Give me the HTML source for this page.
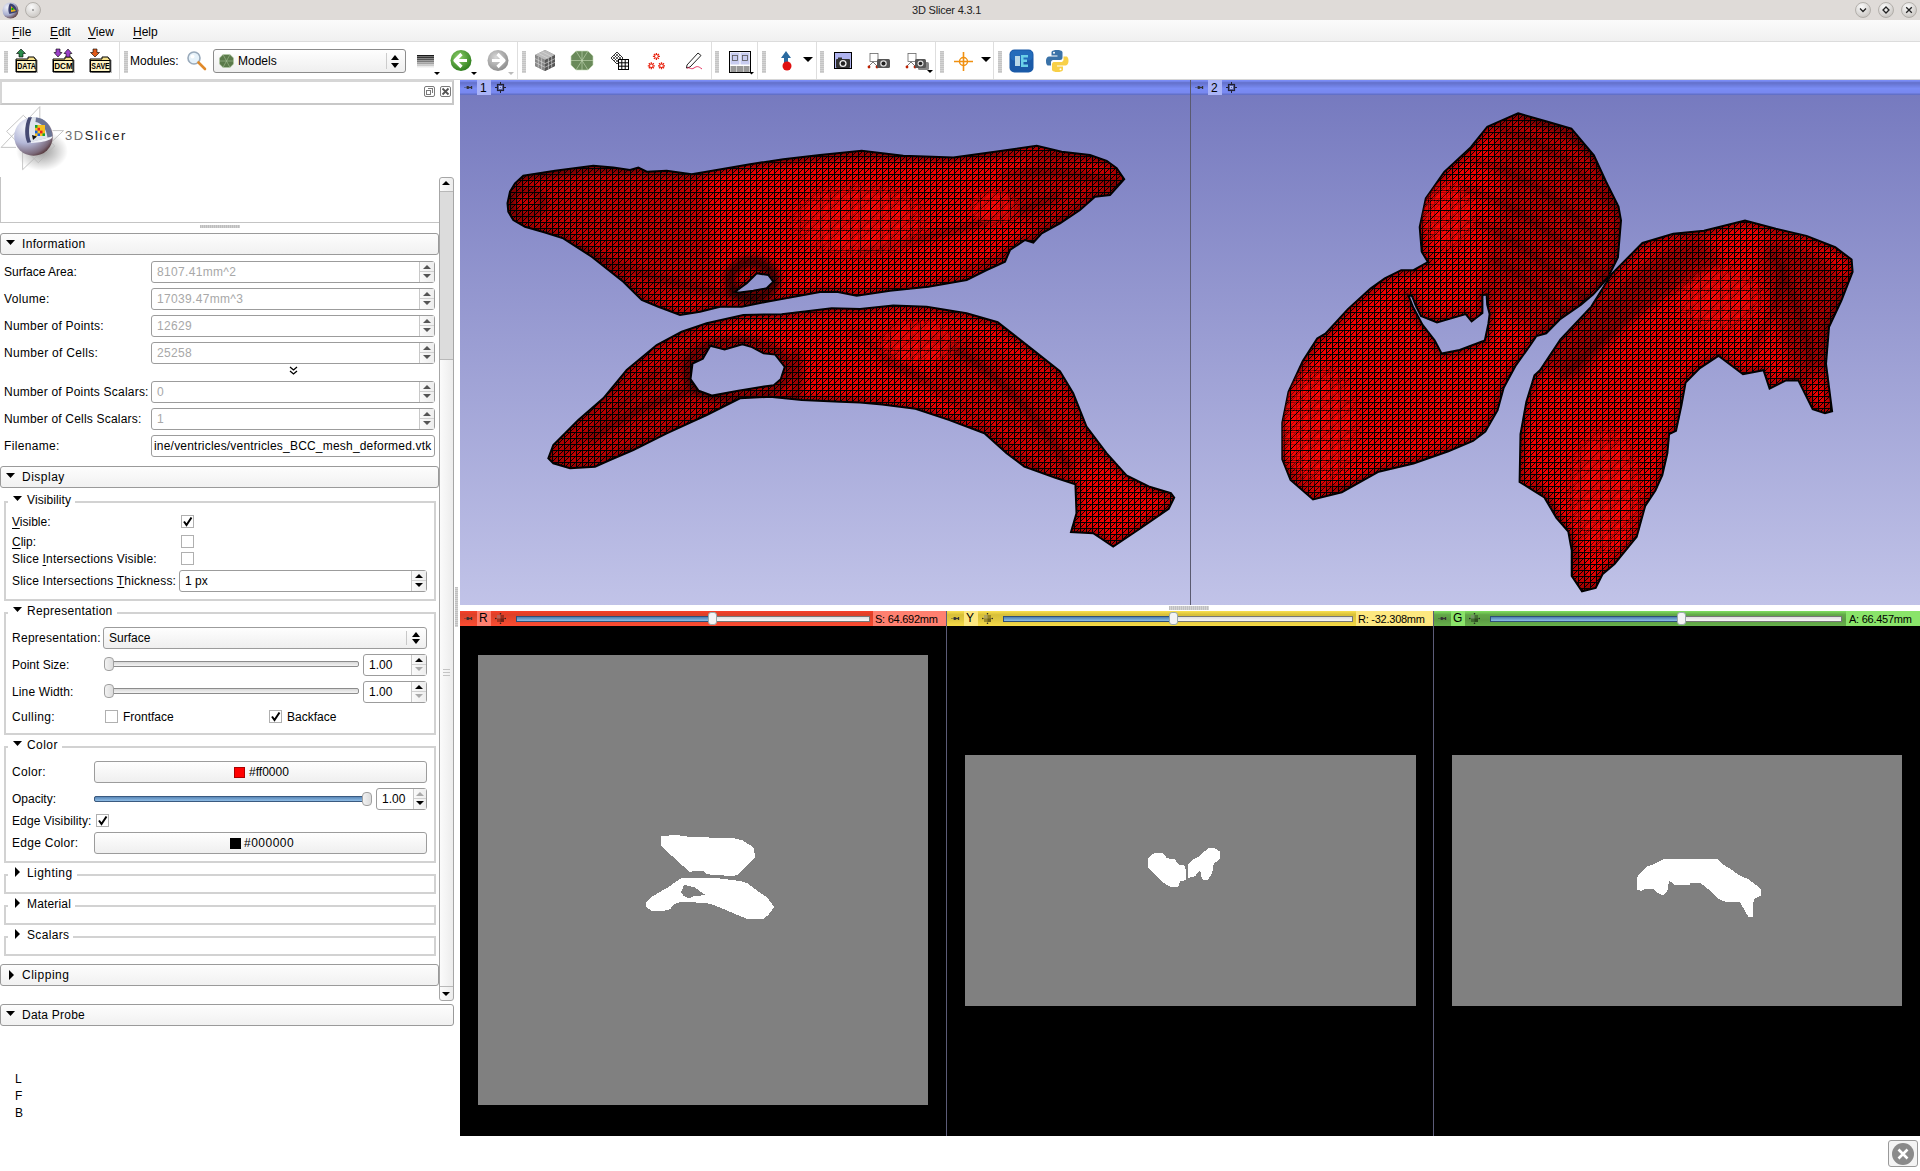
<!DOCTYPE html>
<html><head><meta charset="utf-8">
<style>
*{margin:0;padding:0;box-sizing:border-box}
html,body{width:1920px;height:1171px;overflow:hidden;background:#fff;font-family:"Liberation Sans",sans-serif;font-size:12px;color:#000}
.a{position:absolute}
.t{position:absolute;white-space:nowrap;line-height:14px}
u{text-decoration:underline;text-decoration-thickness:1px;text-underline-offset:2px}
#title{left:0;top:0;width:1920px;height:20px;background:#dfdbd8}
#menu{left:0;top:20px;width:1920px;height:22px;background:linear-gradient(#fbfbfb,#f0f0f0);border-bottom:1px solid #dcdcdc}
#tb{left:0;top:42px;width:1920px;height:38px;background:#fff;border-bottom:1px solid #d6d6d6}
.hdl{position:absolute;top:51px;width:4px;height:22px;background:repeating-linear-gradient(#c4c4c4 0 1px,#d4d4d4 1px 2px)}
.sep{position:absolute;top:42px;width:1px;height:37px;background:#dedede}
.hdr{position:absolute;left:0;height:22px;border:1px solid #9a9a9a;border-radius:3px;background:linear-gradient(#fdfdfd,#f1f1f1)}
.hdr .tri{position:absolute;left:5px;top:6px;width:9px;height:5px;background:#000;clip-path:polygon(0 0,100% 0,50% 100%)}
.hdr .lbl{position:absolute;left:22px;top:3px;font-size:12px;line-height:14px}
.spin{position:absolute;height:22px;border:1px solid #9c9c9c;border-radius:3px;background:#fff}
.spin .v{position:absolute;left:5px;top:3px;line-height:14px;color:#a8a8a8}
.spin .btn::after{content:"";position:absolute;left:0;right:0;top:9px;height:1px;background:#d0d0d0}
.spin .btn{position:absolute;right:0;top:0;width:15px;height:20px;border-left:1px solid #c8c8c8;background:linear-gradient(90deg,#fafafa,#eee)}
.up{position:absolute;left:3px;top:3px;width:0;height:0;border-left:4px solid transparent;border-right:4px solid transparent;border-bottom:4px solid #555}
.dn{position:absolute;left:3px;top:12px;width:0;height:0;border-left:4px solid transparent;border-right:4px solid transparent;border-top:4px solid #555}
.grp{position:absolute;left:5px;width:430px;border:2px solid #d0d0d0;border-top:none}
.gline{position:absolute;height:2px;background:#d0d0d0}
.gtri{position:absolute;width:0;height:0;border-left:5px solid transparent;border-right:5px solid transparent;border-top:5px solid #000}
.rtri{position:absolute;width:0;height:0;border-top:5px solid transparent;border-bottom:5px solid transparent;border-left:5px solid #000}
.cb{position:absolute;width:13px;height:13px;border:1px solid #b0b0b0;background:#fff}
.btnw{position:absolute;border:1px solid #9c9c9c;border-radius:3px;background:linear-gradient(#fefefe,#efefef)}
</style></head><body>

<!-- TITLE BAR -->
<div id="title" class="a"></div>
<div class="t" style="left:912px;top:3px;font-size:11px;color:#222;letter-spacing:-0.2px">3D Slicer 4.3.1</div>

<!-- MENU -->
<div id="menu" class="a"></div>
<div class="t" style="left:12px;top:25px;font-size:12px"><u>F</u>ile</div>
<div class="t" style="left:50px;top:25px;font-size:12px"><u>E</u>dit</div>
<div class="t" style="left:88px;top:25px;font-size:12px"><u>V</u>iew</div>
<div class="t" style="left:133px;top:25px;font-size:12px"><u>H</u>elp</div>

<!-- TOOLBAR -->
<div id="tb" class="a"></div>
<div class="hdl" style="left:4px"></div>
<div class="hdl" style="left:124px"></div>
<div class="hdl" style="left:522px"></div>
<div class="hdl" style="left:715px"></div>
<div class="hdl" style="left:762px"></div>
<div class="hdl" style="left:820px"></div>
<div class="hdl" style="left:940px"></div>
<div class="hdl" style="left:998px"></div>
<div class="sep" style="left:119px"></div>
<div class="sep" style="left:517px"></div>
<div class="sep" style="left:711px"></div>
<div class="sep" style="left:757px"></div>
<div class="sep" style="left:816px"></div>
<div class="sep" style="left:935px"></div>
<div class="sep" style="left:993px"></div>
<svg class="a" style="left:15px;top:48px" width="24" height="26" viewBox="0 0 24 26"><rect x="2" y="11" width="20" height="13" fill="#000" opacity="0.25" transform="translate(1,1)"/><path d="M13 9h6l1 2h1v13H1V11h12z" fill="#f5e08a" stroke="#000" stroke-width="1"/><rect x="1.5" y="12.5" width="19.5" height="11" fill="#fdf4c4" stroke="#000" stroke-width="1"/><text x="11.5" y="21.2" font-family="Liberation Sans" font-size="9.6" font-weight="bold" text-anchor="middle" textLength="18.5" lengthAdjust="spacingAndGlyphs">DATA</text><path d="M6 1L10.5 5.5H8V9H4V5.5H1.5Z" fill="#2a8a4a" stroke="#000" stroke-width="0.6"/></svg>
<svg class="a" style="left:52px;top:48px" width="24" height="26" viewBox="0 0 24 26"><rect x="2" y="11" width="20" height="13" fill="#000" opacity="0.25" transform="translate(1,1)"/><path d="M13 9h6l1 2h1v13H1V11h12z" fill="#f5e08a" stroke="#000" stroke-width="1"/><rect x="1.5" y="12.5" width="19.5" height="11" fill="#fdf4c4" stroke="#000" stroke-width="1"/><text x="11.5" y="21.2" font-family="Liberation Sans" font-size="9.6" font-weight="bold" text-anchor="middle" textLength="18.5" lengthAdjust="spacingAndGlyphs">DCM</text><path d="M6 9L10 4.5H8V1H4V4.5H2Z" fill="#9a40c8" stroke="#000" stroke-width="0.6"/><path d="M16 1L20 5.5H18V9H14V5.5H12Z" fill="#9a40c8" stroke="#000" stroke-width="0.6"/></svg>
<svg class="a" style="left:89px;top:48px" width="24" height="26" viewBox="0 0 24 26"><rect x="2" y="11" width="20" height="13" fill="#000" opacity="0.25" transform="translate(1,1)"/><path d="M13 9h6l1 2h1v13H1V11h12z" fill="#f5e08a" stroke="#000" stroke-width="1"/><rect x="1.5" y="12.5" width="19.5" height="11" fill="#fdf4c4" stroke="#000" stroke-width="1"/><text x="11.5" y="21.2" font-family="Liberation Sans" font-size="9.6" font-weight="bold" text-anchor="middle" textLength="18.5" lengthAdjust="spacingAndGlyphs">SAVE</text><path d="M6 9L10.5 4.5H8V1H4V4.5H1.5Z" fill="#e05a1a" stroke="#000" stroke-width="0.6"/></svg>
<div class="t" style="left:130px;top:54px">Modules:</div>
<svg class="a" style="left:186px;top:50px" width="22" height="22"><circle cx="8" cy="8" r="6" fill="#e6f2fa" stroke="#9ab" stroke-width="1.6"/><circle cx="6.5" cy="6.5" r="2" fill="#fff"/><path d="M12.5 12.5L19 19" stroke="#e08a2a" stroke-width="2.6" stroke-linecap="round"/></svg>
<div class="btnw" style="left:213px;top:49px;width:193px;height:24px;border-color:#8c8c8c"><svg class="a" style="left:5px;top:4px" width="15" height="14"><path d="M4 0.5H11L14.5 4V10L11 13.5H4L0.5 10V4Z" fill="#5a7a4a"/><path d="M4 0.5H11L14.5 4V10L11 13.5H4L0.5 10V4Z M4 0.5L11 13.5M11 0.5L4 13.5M0.5 7H14.5" fill="none" stroke="#b8d0a8" stroke-width="0.6" opacity="0.8"/></svg><div class="t" style="left:24px;top:4px;font-size:12px">Models</div><div class="a" style="left:172px;top:3px;width:1px;height:16px;background:#ccc"></div><div class="a" style="left:177px;top:5px;width:0;height:0;border-left:4px solid transparent;border-right:4px solid transparent;border-bottom:5px solid #000"></div><div class="a" style="left:177px;top:13px;width:0;height:0;border-left:4px solid transparent;border-right:4px solid transparent;border-top:5px solid #000"></div></div>
<div class="a" style="left:417px;top:55px;width:17px;height:13px;background:repeating-linear-gradient(transparent 0 1px,rgba(255,255,255,0.35) 1px 2px),linear-gradient(#111,#555 35%,#bbb 75%,#fff)"></div>
<div class="a" style="left:434px;top:72px;width:0;height:0;border-left:3px solid transparent;border-right:3px solid transparent;border-top:3px solid #000"></div>
<div class="a" style="left:471px;top:72px;width:0;height:0;border-left:3px solid transparent;border-right:3px solid transparent;border-top:3px solid #000"></div>
<div class="a" style="left:508px;top:72px;width:0;height:0;border-left:3px solid transparent;border-right:3px solid transparent;border-top:3px solid #bbb"></div>
<svg class="a" style="left:450px;top:49px" width="22" height="23"><defs><radialGradient id="gb" cx="0.4" cy="0.35" r="0.7"><stop offset="0" stop-color="#8ed06a"/><stop offset="1" stop-color="#2a7a1a"/></radialGradient></defs><circle cx="11" cy="11.5" r="10.5" fill="url(#gb)"/><path d="M11.5 5L5 11.5L11.5 18M5.5 11.5H17" stroke="#fff" stroke-width="3.2" fill="none" stroke-linejoin="round"/></svg>
<svg class="a" style="left:487px;top:49px" width="22" height="23"><defs><radialGradient id="gg" cx="0.4" cy="0.35" r="0.7"><stop offset="0" stop-color="#d8d8d8"/><stop offset="1" stop-color="#8a8a8a"/></radialGradient></defs><circle cx="11" cy="11.5" r="10.5" fill="url(#gg)"/><path d="M10.5 5L17 11.5L10.5 18M16.5 11.5H5" stroke="#fff" stroke-width="3.2" fill="none" stroke-linejoin="round"/></svg>
<svg class="a" style="left:534px;top:49px" width="22" height="23"><path d="M11 1L21 6V17L11 22L1 17V6Z" fill="#777"/><path d="M11 1L21 6L11 11L1 6Z" fill="#bbb"/><path d="M1 6L11 11V22L1 17Z" fill="#888"/><path d="M21 6L11 11V22L21 17Z" fill="#555"/><path d="M4.3 4.3L14.3 9.3M7.6 2.6L17.6 7.6M4.3 7.6V18.6M7.6 9.3V20.3M17.7 7.6V18.6M14.4 9.3V20.3M1 9.6L11 14.6L21 9.6M1 13.3L11 18.3L21 13.3" stroke="#ddd" stroke-width="0.6" fill="none"/></svg>
<svg class="a" style="left:570px;top:50px" width="24" height="21"><path d="M6 1H18L23 6V15L18 20H6L1 15V6Z" fill="#6a8a5a"/><path d="M6 1H18L23 6V15L18 20H6L1 15V6Z M6 1L18 20M18 1L6 20M1 10.5H23M12 1V20" stroke="#c8dcb8" stroke-width="0.6" fill="none"/></svg>
<svg class="a" style="left:610px;top:51px" width="20" height="20"><path d="M1 7L7 1L13 7L7 13Z" fill="#fff" stroke="#000" stroke-width="0.8"/><path d="M2.5 5.5L8.5 11.5M4 4L10 10M5.5 2.5L11.5 8.5M2.5 8.5L8.5 2.5M4 10L10 4M5.5 11.5L11.5 5.5" stroke="#000" stroke-width="0.6"/><rect x="8.5" y="8.5" width="10" height="10" fill="#fff" stroke="#000" stroke-width="1"/><path d="M11.8 8.5V18.5M15.2 8.5V18.5M8.5 11.8H18.5M8.5 15.2H18.5" stroke="#000" stroke-width="1"/></svg>
<svg class="a" style="left:646px;top:52px" width="21" height="18"><path d="M6.90 4.40L13.90 4.40M7.93 1.93L12.87 6.87M10.40 0.90L10.40 7.90M12.87 1.93L7.93 6.87M1.80 13.80L8.80 13.80M2.83 11.33L7.77 16.27M5.30 10.30L5.30 17.30M7.77 11.33L2.83 16.27M12.00 13.80L19.00 13.80M13.03 11.33L17.97 16.27M15.50 10.30L15.50 17.30M17.97 11.33L13.03 16.27" stroke="#e8200c" stroke-width="1.3" fill="none"/><circle cx="10.4" cy="4.4" r="1.3" fill="#fff"/><circle cx="5.3" cy="13.8" r="1.3" fill="#fff"/><circle cx="15.5" cy="13.8" r="1.3" fill="#fff"/></svg>
<svg class="a" style="left:685px;top:51px" width="19" height="20"><path d="M2 14L13 2L16 4.5L5 16L1.5 17Z" fill="#fff" stroke="#222" stroke-width="1"/><path d="M2 17C5 16 6 19 9 17S13 15 17 18" stroke="#e02050" stroke-width="0.9" fill="none"/></svg>
<svg class="a" style="left:729px;top:51px" width="25" height="24"><rect x="0.5" y="0.5" width="21" height="21" fill="#fff" stroke="#000"/><rect x="1.5" y="1.5" width="9" height="12" fill="#c8ccf0"/><rect x="11.5" y="1.5" width="9" height="12" fill="#c8ccf0"/><rect x="3.5" y="4.5" width="5" height="5" fill="none" stroke="#555" stroke-width="0.8"/><rect x="13.5" y="4.5" width="5" height="5" fill="none" stroke="#555" stroke-width="0.8"/><rect x="1.5" y="15" width="6" height="6" fill="#999"/><rect x="8" y="15" width="6" height="6" fill="#999"/><rect x="14.5" y="15" width="6" height="6" fill="#999"/><path d="M20 21H25L22.5 23.5Z" fill="#000"/></svg>
<svg class="a" style="left:780px;top:50px" width="14" height="22"><path d="M6 1L11 8H8V14H4V8H1Z" fill="#2a6aa0"/><circle cx="7" cy="16" r="4.5" fill="#e01010"/></svg>
<div class="a" style="left:803px;top:57px;width:0;height:0;border-left:5px solid transparent;border-right:5px solid transparent;border-top:5px solid #000"></div>
<svg class="a" style="left:834px;top:52px" width="19" height="18"><rect x="0.5" y="0.5" width="17" height="16" fill="#b0b4f0" stroke="#000"/><rect x="2" y="7" width="14" height="9" rx="1" fill="#333"/><circle cx="9" cy="11.5" r="3.6" fill="#eee"/><circle cx="9" cy="11.5" r="2.2" fill="#222"/><rect x="4" y="5.5" width="4" height="2" fill="#333"/></svg>
<svg class="a" style="left:867px;top:53px" width="24" height="17"><rect x="3" y="0.5" width="8" height="8" fill="#fff" stroke="#666" stroke-width="0.8"/><path d="M3 12L6 9L9 12M1 14L3 12M11 14L9 12" stroke="#555" stroke-width="0.8" fill="none"/><circle cx="2" cy="14" r="1.4" fill="#c02000"/><circle cx="10" cy="14" r="1.4" fill="#c02000"/><rect x="10" y="6" width="13" height="9" rx="1.5" fill="#555"/><circle cx="16.5" cy="10.5" r="3.3" fill="#ddd"/><circle cx="16.5" cy="10.5" r="2" fill="#222"/></svg>
<svg class="a" style="left:905px;top:53px" width="28" height="20"><rect x="3" y="0.5" width="8" height="8" fill="#fff" stroke="#666" stroke-width="0.8"/><path d="M3 12L6 9L9 12M1 14L3 12M11 14L9 12" stroke="#555" stroke-width="0.8" fill="none"/><circle cx="2" cy="14" r="1.4" fill="#c02000"/><circle cx="10" cy="14" r="1.4" fill="#c02000"/><rect x="13" y="9" width="11" height="8" rx="1.5" fill="#888"/><rect x="10" y="6" width="11" height="9" rx="1.5" fill="#555"/><circle cx="15.5" cy="10.5" r="3" fill="#ddd"/><circle cx="15.5" cy="10.5" r="1.8" fill="#222"/><path d="M22 17H28L25 20Z" fill="#000"/></svg>
<svg class="a" style="left:953px;top:51px" width="21" height="21"><path d="M10.5 1V20M1 10.5H20" stroke="#f09010" stroke-width="1.6"/><circle cx="10.5" cy="10.5" r="4" fill="none" stroke="#f09010" stroke-width="1.4"/></svg>
<div class="a" style="left:981px;top:57px;width:0;height:0;border-left:5px solid transparent;border-right:5px solid transparent;border-top:5px solid #000"></div>
<svg class="a" style="left:1009px;top:49px" width="25" height="24"><rect x="0.5" y="0.5" width="24" height="23" rx="5" fill="#1a5aa8"/><rect x="1.5" y="1.5" width="22" height="10" rx="4" fill="#2a78c8" opacity="0.6"/><path d="M6 7H11V17H6Z" fill="#b8d8e8"/><path d="M12 6H19V8.5H14.5V10.5H18V13H14.5V15.5H19V18H12Z" fill="#6ad0e8"/></svg>
<svg class="a" style="left:1045px;top:49px" width="25" height="24"><path d="M12 1C6 1 6.5 3.5 6.5 3.5V6.5H12.5V7.5H4C1 7.5 1 12 1 12C1 17 3.5 16.5 3.5 16.5H6V13.5C6 13.5 6 11 8.5 11H15C15 11 17.5 11 17.5 8.5V3.5C17.5 3.5 18 1 12 1Z" fill="#3a72a8"/><path d="M12.5 23C18.5 23 18 20.5 18 20.5V17.5H12V16.5H20.5C23.5 16.5 23.5 12 23.5 12C23.5 7 21 7.5 21 7.5H18.5V10.5C18.5 10.5 18.5 13 16 13H9.5C9.5 13 7 13 7 15.5V20.5C7 20.5 6.5 23 12.5 23Z" fill="#f8d048"/><circle cx="9" cy="3.8" r="1" fill="#fff"/><circle cx="15.5" cy="20.2" r="1" fill="#fff"/></svg>
<svg class="a" style="left:1px;top:1px" width="19" height="19"><defs><radialGradient id="ts" cx="0.3" cy="0.3" r="0.8"><stop offset="0" stop-color="#eef0f8"/><stop offset="0.6" stop-color="#a8aed0"/><stop offset="1" stop-color="#5a3838"/></radialGradient></defs><circle cx="9.5" cy="9.5" r="8" fill="url(#ts)"/><path d="M9 2.5C7 5 7 11 8.5 13C11 12 14 12 16 11C16 6 13 3 9 2.5Z" fill="#3a4070"/><path d="M10 5L10 11L15 10Z" fill="#e8b020"/><rect x="10.5" y="7" width="2" height="2" fill="#0a0"/></svg>
<svg class="a" style="left:24px;top:1px" width="18" height="18"><defs><radialGradient id="wb" cx="0.4" cy="0.3" r="0.8"><stop offset="0" stop-color="#fafafa"/><stop offset="1" stop-color="#c4c0bc"/></radialGradient></defs><circle cx="9" cy="9" r="7.5" fill="url(#wb)" stroke="#a8a4a0" stroke-width="0.8"/><circle cx="9" cy="9" r="0.8" fill="#555"/></svg>
<svg class="a" style="left:1854px;top:1px" width="18" height="18"><defs><radialGradient id="wbv" cx="0.4" cy="0.3" r="0.8"><stop offset="0" stop-color="#fafafa"/><stop offset="1" stop-color="#c4c0bc"/></radialGradient></defs><circle cx="9" cy="9" r="7.5" fill="url(#wbv)" stroke="#a8a4a0" stroke-width="0.8"/><path d="M6 7.5L9 10.5L12 7.5" stroke="#222" stroke-width="1.3" fill="none"/></svg>
<svg class="a" style="left:1877px;top:1px" width="18" height="18"><defs><radialGradient id="wbo" cx="0.4" cy="0.3" r="0.8"><stop offset="0" stop-color="#fafafa"/><stop offset="1" stop-color="#c4c0bc"/></radialGradient></defs><circle cx="9" cy="9" r="7.5" fill="url(#wbo)" stroke="#a8a4a0" stroke-width="0.8"/><path d="M9 6L12 9L9 12L6 9Z" stroke="#222" stroke-width="1.3" fill="none"/></svg>
<svg class="a" style="left:1900px;top:1px" width="18" height="18"><defs><radialGradient id="wbx" cx="0.4" cy="0.3" r="0.8"><stop offset="0" stop-color="#fafafa"/><stop offset="1" stop-color="#c4c0bc"/></radialGradient></defs><circle cx="9" cy="9" r="7.5" fill="url(#wbx)" stroke="#a8a4a0" stroke-width="0.8"/><path d="M6.2 6.2L11.8 11.8M11.8 6.2L6.2 11.8" stroke="#222" stroke-width="1.3"/></svg>

<!-- LEFT PANEL -->
<div class="a" style="left:0;top:80px;width:454px;height:25px;border:2px solid #d6d6d6;border-bottom-color:#c8c8c8;border-right-color:#c8c8c8;background:#fff"></div>
<div class="a" style="left:424px;top:86px;width:11px;height:11px;border:1px solid #7a7a7a;border-radius:2px"></div>
<div class="a" style="left:426px;top:90px;width:5px;height:5px;border:1px solid #7a7a7a;background:#fff"></div>
<div class="a" style="left:428px;top:88px;width:5px;height:5px;border:1px solid #7a7a7a;border-left:none;border-bottom:none"></div>
<div class="a" style="left:440px;top:86px;width:11px;height:11px;border:1px solid #7a7a7a;border-radius:2px"></div>
<svg class="a" style="left:440px;top:86px" width="11" height="11"><path d="M2.5 2.5L8.5 8.5M8.5 2.5L2.5 8.5" stroke="#555" stroke-width="1.8"/></svg>
<svg class="a" style="left:0;top:104px" width="70" height="72">
<defs><radialGradient id="sph" cx="0.3" cy="0.25" r="0.85"><stop offset="0" stop-color="#f6f8fc"/><stop offset="0.5" stop-color="#b4b8d8"/><stop offset="0.85" stop-color="#7a6878"/><stop offset="1" stop-color="#4a2828"/></radialGradient>
<radialGradient id="shd" cx="0.5" cy="0.5" r="0.5"><stop offset="0" stop-color="#000" stop-opacity="0.4"/><stop offset="1" stop-color="#000" stop-opacity="0"/></radialGradient></defs>
<ellipse cx="42" cy="47" rx="26" ry="20" fill="url(#shd)"/>
<path d="M1.1 43.4L39.8 2.6V26.599999999999994 M1.1 43.4H16 M22.6 39.8V65.69999999999999L63.5 26.6H52.5 M6.6 27.4L23.3 11.3L54.7 41.9L38.3 58.7Z" fill="none" stroke="#b8b8b8" stroke-width="0.8"/>
<circle cx="33.5" cy="32.5" r="19.3" fill="url(#sph)"/>
<path d="M28.4 13.3C32.0 12.5 45.0 12.0 52.5 32.5L31.0 38.0C27.0 31.0 27.0 20.0 28.4 13.3Z" fill="#dfe4ec"/>
<path d="M28.4 13.3C24.0 22.0 24.5 33.0 27.5 39.0L31.0 38.0C28.0 31.0 28.5 20.0 32.0 13.2Z" fill="#454a72"/>
<path d="M36.0 13.5C45.0 14.0 51.0 21.0 52.5 32.5L47.5 33.5C46.5 25.0 42.0 19.0 35.5 18.0Z" fill="#6a7494"/>
<path d="M31.0 38.0L52.5 32.5C52.0 35.0 48.0 38.0 31.0 39.0Z" fill="#f0f2f8"/>
<rect x="35" y="21" width="10" height="11" fill="#f5c020"/>
<rect x="35" y="21" width="2.5" height="2.8" fill="#14a030"/><rect x="37.5" y="23.799999999999997" width="2.5" height="2.8" fill="#e82020"/><rect x="35" y="26.599999999999994" width="2.5" height="2.8" fill="#1860e0"/><rect x="40" y="26.599999999999994" width="2.5" height="2.8" fill="#e82020"/><rect x="37.5" y="29.400000000000006" width="2.5" height="2.6" fill="#1860e0"/><rect x="42.5" y="29.400000000000006" width="2.5" height="2.6" fill="#14a030"/>
<path d="M32.0 31.0L37.0 32.5L33.0 36.0Z" fill="#111"/>
</svg>
<div class="t" style="left:65px;top:129px;font-size:13px;letter-spacing:1.6px;color:#1a1a1a"><span style="color:#707070">3D</span>Slicer</div>
<div class="a" style="left:0;top:177px;width:439px;height:46px;border-left:1px solid #c4c4c4;border-bottom:1px solid #c4c4c4"></div>
<div class="a" style="left:200px;top:225px;width:40px;height:3px;background:repeating-linear-gradient(90deg,#bdbdbd 0 1px,#d0d0d0 1px 2px)"></div>
<div class="a" style="left:439px;top:177px;width:15px;height:824px;border:1px solid #a6a6a6;border-radius:3px;background:linear-gradient(90deg,#fbfbfb,#ececec)"></div>
<div class="a" style="left:440px;top:191px;width:13px;height:169px;background:#dcdcdc;border-top:1px solid #b8b8b8;border-bottom:1px solid #b8b8b8"></div>
<div class="a" style="left:442px;top:181px;width:0;height:0;border-left:4px solid transparent;border-right:4px solid transparent;border-bottom:4px solid #000"></div>
<div class="a" style="left:440px;top:986px;width:13px;height:1px;background:#b8b8b8"></div>
<div class="a" style="left:442px;top:992px;width:0;height:0;border-left:4px solid transparent;border-right:4px solid transparent;border-top:4px solid #000"></div>
<div class="a" style="left:443px;top:669px;width:7px;height:8px;background:repeating-linear-gradient(#c4c4c4 0 1px,transparent 1px 3px)"></div>
<div class="hdr" style="top:233px;width:439px;height:22px"><div class="tri"></div><div class="lbl" style="left:21px;letter-spacing:0.31px">Information</div></div>
<div class="t" style="left:4px;top:265px">Surface Area:</div>
<div class="spin" style="left:151px;top:261px;width:284px"><div class="v" style="letter-spacing:0.33px">8107.41mm^2</div><div class="btn"><div class="up"></div><div class="dn"></div></div></div>
<div class="t" style="left:4px;top:292px;letter-spacing:0.32px">Volume:</div>
<div class="spin" style="left:151px;top:288px;width:284px"><div class="v" style="letter-spacing:0.33px">17039.47mm^3</div><div class="btn"><div class="up"></div><div class="dn"></div></div></div>
<div class="t" style="left:4px;top:319px;letter-spacing:0.22px">Number of Points:</div>
<div class="spin" style="left:151px;top:315px;width:284px"><div class="v" style="letter-spacing:0.33px">12629</div><div class="btn"><div class="up"></div><div class="dn"></div></div></div>
<div class="t" style="left:4px;top:346px;letter-spacing:0.30px">Number of Cells:</div>
<div class="spin" style="left:151px;top:342px;width:284px"><div class="v" style="letter-spacing:0.33px">25258</div><div class="btn"><div class="up"></div><div class="dn"></div></div></div>
<div class="t" style="left:4px;top:385px;letter-spacing:0.21px">Number of Points Scalars:</div>
<div class="spin" style="left:151px;top:381px;width:284px"><div class="v">0</div><div class="btn"><div class="up"></div><div class="dn"></div></div></div>
<div class="t" style="left:4px;top:412px;letter-spacing:0.20px">Number of Cells Scalars:</div>
<div class="spin" style="left:151px;top:408px;width:284px"><div class="v">1</div><div class="btn"><div class="up"></div><div class="dn"></div></div></div>
<div class="t" style="left:4px;top:439px;letter-spacing:0.34px">Filename:</div>
<div class="spin" style="left:151px;top:435px;width:284px"><div class="v" style="color:#000;left:2px;letter-spacing:0.2px">ine/ventricles/ventricles_BCC_mesh_deformed.vtk</div></div>
<svg class="a" style="left:289px;top:366px" width="9" height="10"><path d="M1 1L4.5 4L8 1M1 5L4.5 8L8 5" fill="none" stroke="#000" stroke-width="1.3"/></svg>
<div class="hdr" style="top:466px;width:439px;height:22px"><div class="tri"></div><div class="lbl" style="left:21px;letter-spacing:0.50px">Display</div></div>
<div class="a" style="left:4px;top:501px;width:432px;height:100px;border:2px solid #d2d2d2"></div><div class="a" style="left:8px;top:493px;width:20px;height:14px;background:#fff"></div><div class="a" style="left:13px;top:496px;width:9px;height:5px;background:#000;clip-path:polygon(0 0,100% 0,50% 100%)"></div><div class="t" style="left:27px;top:493px;background:#fff;padding-right:4px;letter-spacing:0.09px">Visibility</div>
<div class="t" style="left:12px;top:515px"><u>V</u>isible:</div>
<div class="t" style="left:12px;top:535px"><u>C</u>lip:</div>
<div class="t" style="left:12px;top:552px;letter-spacing:0.20px">Slice <u>I</u>ntersections Visible:</div>
<div class="t" style="left:12px;top:574px;letter-spacing:0.21px">Slice Intersections <u>T</u>hickness:</div>
<div class="cb" style="left:181px;top:515px"></div><svg class="a" style="left:181px;top:515px" width="13" height="13"><path d="M3 6.5L5.5 10L10.5 2.5" fill="none" stroke="#000" stroke-width="2"/></svg>
<div class="cb" style="left:181px;top:535px"></div>
<div class="cb" style="left:181px;top:552px"></div>
<div class="spin" style="left:179px;top:570px;width:248px"><div class="v" style="color:#000">1 px</div><div class="btn"><div class="up" style="border-bottom-color:#000"></div><div class="dn" style="border-top-color:#000"></div></div></div>
<div class="a" style="left:4px;top:612px;width:432px;height:123px;border:2px solid #d2d2d2"></div><div class="a" style="left:8px;top:604px;width:20px;height:14px;background:#fff"></div><div class="a" style="left:13px;top:607px;width:9px;height:5px;background:#000;clip-path:polygon(0 0,100% 0,50% 100%)"></div><div class="t" style="left:27px;top:604px;background:#fff;padding-right:4px;letter-spacing:0.30px">Representation</div>
<div class="t" style="left:12px;top:631px;letter-spacing:0.27px">Representation:</div>
<div class="btnw" style="left:103px;top:627px;width:324px;height:22px"><div class="t" style="left:5px;top:3px">Surface</div><div class="a" style="left:302px;top:3px;width:1px;height:14px;background:#c8c8c8"></div><div class="a" style="left:308px;top:4px;width:0;height:0;border-left:4px solid transparent;border-right:4px solid transparent;border-bottom:5px solid #000"></div><div class="a" style="left:308px;top:11px;width:0;height:0;border-left:4px solid transparent;border-right:4px solid transparent;border-top:5px solid #000"></div></div>
<div class="t" style="left:12px;top:658px">Point Size:</div>
<div class="a" style="left:104px;top:661px;width:255px;height:6px;border:1px solid #8c8c8c;border-radius:2px;background:linear-gradient(#d8d8d8,#f4f4f4)"></div><div class="a" style="left:104px;top:657px;width:10px;height:14px;border:1px solid #a0a0a0;border-radius:4px;background:linear-gradient(90deg,#f2f2f2,#dcdcdc)"></div>
<div class="spin" style="left:363px;top:654px;width:64px;height:22px"><div class="v" style="color:#000">1.00</div><div class="btn"><div class="up" style="border-bottom-color:#000"></div><div class="dn" style="border-top-color:#aaa"></div></div></div>
<div class="t" style="left:12px;top:685px;letter-spacing:0.14px">Line Width:</div>
<div class="a" style="left:104px;top:688px;width:255px;height:6px;border:1px solid #8c8c8c;border-radius:2px;background:linear-gradient(#d8d8d8,#f4f4f4)"></div><div class="a" style="left:104px;top:684px;width:10px;height:14px;border:1px solid #a0a0a0;border-radius:4px;background:linear-gradient(90deg,#f2f2f2,#dcdcdc)"></div>
<div class="spin" style="left:363px;top:681px;width:64px;height:22px"><div class="v" style="color:#000">1.00</div><div class="btn"><div class="up" style="border-bottom-color:#000"></div><div class="dn" style="border-top-color:#aaa"></div></div></div>
<div class="t" style="left:12px;top:710px;letter-spacing:0.37px">Culling:</div>
<div class="cb" style="left:105px;top:710px"></div>
<div class="t" style="left:123px;top:710px">Frontface</div>
<div class="cb" style="left:269px;top:710px"></div><svg class="a" style="left:269px;top:710px" width="13" height="13"><path d="M3 6.5L5.5 10L10.5 2.5" fill="none" stroke="#000" stroke-width="2"/></svg>
<div class="t" style="left:287px;top:710px">Backface</div>
<div class="a" style="left:4px;top:746px;width:432px;height:117px;border:2px solid #d2d2d2"></div><div class="a" style="left:8px;top:738px;width:20px;height:14px;background:#fff"></div><div class="a" style="left:13px;top:741px;width:9px;height:5px;background:#000;clip-path:polygon(0 0,100% 0,50% 100%)"></div><div class="t" style="left:27px;top:738px;background:#fff;padding-right:4px;letter-spacing:0.43px">Color</div>
<div class="t" style="left:12px;top:765px;letter-spacing:0.30px">Color:</div>
<div class="btnw" style="left:94px;top:761px;width:333px;height:22px"><div class="a" style="left:139px;top:5px;width:11px;height:11px;background:#f00;border:1px solid #a00"></div><div class="t" style="left:154px;top:3px">#ff0000</div></div>
<div class="t" style="left:12px;top:792px">Opacity:</div>
<div class="a" style="left:94px;top:796px;width:272px;height:6px;border:1px solid #8c8c8c;border-radius:2px;background:linear-gradient(#d8d8d8,#f4f4f4)"></div><div class="a" style="left:94px;top:796px;width:271px;height:6px;border:1px solid #3a5a80;border-radius:2px;background:linear-gradient(#5a88b8,#8fbde6)"></div><div class="a" style="left:362px;top:792px;width:10px;height:14px;border:1px solid #a0a0a0;border-radius:4px;background:linear-gradient(90deg,#f2f2f2,#dcdcdc)"></div>
<div class="spin" style="left:376px;top:788px;width:51px;height:22px"><div class="v" style="color:#000">1.00</div><div class="btn" style="width:13px"><div class="up" style="left:2px;border-bottom-color:#aaa"></div><div class="dn" style="left:2px;border-top-color:#000"></div></div></div>
<div class="t" style="left:12px;top:814px;letter-spacing:0.10px">Edge Visibility:</div>
<div class="cb" style="left:96px;top:814px"></div><svg class="a" style="left:96px;top:814px" width="13" height="13"><path d="M3 6.5L5.5 10L10.5 2.5" fill="none" stroke="#000" stroke-width="2"/></svg>
<div class="t" style="left:12px;top:836px;letter-spacing:0.27px">Edge Color:</div>
<div class="btnw" style="left:94px;top:832px;width:333px;height:22px"><div class="a" style="left:135px;top:5px;width:11px;height:11px;background:#000"></div><div class="t" style="left:149px;top:3px;letter-spacing:0.5px">#000000</div></div>
<div class="a" style="left:4px;top:874px;width:432px;height:20px;border:2px solid #d2d2d2"></div><div class="a" style="left:8px;top:866px;width:20px;height:14px;background:#fff"></div><div class="a" style="left:15px;top:867px;width:0;height:0;border-top:5px solid transparent;border-bottom:5px solid transparent;border-left:5px solid #000"></div><div class="t" style="left:27px;top:866px;background:#fff;padding-right:4px;letter-spacing:0.44px">Lighting</div>
<div class="a" style="left:4px;top:905px;width:432px;height:20px;border:2px solid #d2d2d2"></div><div class="a" style="left:8px;top:897px;width:20px;height:14px;background:#fff"></div><div class="a" style="left:15px;top:898px;width:0;height:0;border-top:5px solid transparent;border-bottom:5px solid transparent;border-left:5px solid #000"></div><div class="t" style="left:27px;top:897px;background:#fff;padding-right:4px;letter-spacing:0.17px">Material</div>
<div class="a" style="left:4px;top:936px;width:432px;height:20px;border:2px solid #d2d2d2"></div><div class="a" style="left:8px;top:928px;width:20px;height:14px;background:#fff"></div><div class="a" style="left:15px;top:929px;width:0;height:0;border-top:5px solid transparent;border-bottom:5px solid transparent;border-left:5px solid #000"></div><div class="t" style="left:27px;top:928px;background:#fff;padding-right:4px;letter-spacing:0.35px">Scalars</div>
<div class="hdr" style="top:964px;width:439px;height:22px"><div class="a" style="left:8px;top:5px;width:0;height:0;border-top:5px solid transparent;border-bottom:5px solid transparent;border-left:5px solid #000"></div><div class="lbl" style="left:21px;letter-spacing:0.51px">Clipping</div></div>
<div class="hdr" style="top:1004px;width:454px;height:22px"><div class="tri"></div><div class="lbl" style="left:21px;letter-spacing:0.23px">Data Probe</div></div>
<div class="t" style="left:15px;top:1072px">L</div>
<div class="t" style="left:15px;top:1089px">F</div>
<div class="t" style="left:15px;top:1106px">B</div>

<!-- VIEWS -->
<div class="a" style="left:460px;top:80px;width:1460px;height:525px;background:linear-gradient(#7478be,#c1c3e8)"></div>
<div class="a" style="left:460px;top:80px;width:1460px;height:15px;background:linear-gradient(#7a8cf5 0px,#7a8cf5 1px,#6674d0 2.5px,#6674d0 3.5px,#7080e2 6px,#7a8cf4 8.5px,#7888f0 12.5px,#6270c8 14.5px,#6270c8 15px)"></div>
<div class="a" style="left:1190px;top:80px;width:1px;height:525px;background:#5a5a70"></div>
<svg class="a" style="left:464px;top:85px" width="9" height="5"><path d="M0 2.5H2.5" stroke="#333" stroke-width="0.6" opacity="0.7"/><rect x="2.5" y="1" width="2.5" height="3" rx="0.8" fill="#333"/><rect x="5" y="1.8" width="2" height="1.4" fill="#333"/><rect x="7" y="1" width="1.2" height="3" fill="#333"/></svg>
<div class="a" style="left:477px;top:80px;width:14px;height:15px;background:#aab4f8"></div>
<div class="t" style="left:480px;top:81px;font-size:12px;line-height:14px">1</div>
<svg class="a" style="left:495px;top:82px" width="11" height="11"><path d="M5.5 0V11M0 5.5H11" stroke="#223" stroke-width="1"/><rect x="2.5" y="2.5" width="6" height="6" fill="#5a66b0" stroke="#223" stroke-width="1.2"/><rect x="4.5" y="4.5" width="2" height="2" fill="none" stroke="#c8d0ff" stroke-width="0.8"/></svg>
<svg class="a" style="left:1195px;top:85px" width="9" height="5"><path d="M0 2.5H2.5" stroke="#333" stroke-width="0.6" opacity="0.7"/><rect x="2.5" y="1" width="2.5" height="3" rx="0.8" fill="#333"/><rect x="5" y="1.8" width="2" height="1.4" fill="#333"/><rect x="7" y="1" width="1.2" height="3" fill="#333"/></svg>
<div class="a" style="left:1208px;top:80px;width:14px;height:15px;background:#aab4f8"></div>
<div class="t" style="left:1211px;top:81px;font-size:12px;line-height:14px">2</div>
<svg class="a" style="left:1226px;top:82px" width="11" height="11"><path d="M5.5 0V11M0 5.5H11" stroke="#223" stroke-width="1"/><rect x="2.5" y="2.5" width="6" height="6" fill="#5a66b0" stroke="#223" stroke-width="1.2"/><rect x="4.5" y="4.5" width="2" height="2" fill="none" stroke="#c8d0ff" stroke-width="0.8"/></svg>
<svg class="a" style="left:0;top:0" width="0" height="0"><defs>
<pattern id="mesh" width="12" height="12" patternUnits="userSpaceOnUse">
<rect width="12" height="12" fill="#f00000"/>
<path d="M0 0.5H12M0 6.5H12M0.5 0V12M6.5 0V12M0 6L6 0M6 12L12 6M6 6L12 0M0 12L6 6" stroke="#000" stroke-width="1" fill="none" shape-rendering="crispEdges"/>
</pattern>
<pattern id="mesh2" width="12" height="12" patternUnits="userSpaceOnUse">
<rect width="12" height="12" fill="#f00000"/>
<path d="M0 0.5H12M0 6.5H12M0.5 0V12M6.5 0V12M0 6L6 0M6 12L12 6M6 6L12 0M0 12L6 6" stroke="#000" stroke-width="1" fill="none" shape-rendering="crispEdges"/>
</pattern>

<pattern id="meshBig" width="20" height="20" patternUnits="userSpaceOnUse">
<rect width="20" height="20" fill="#ff0a0a"/>
<path d="M0 0.5H20M0 10.5H20M0.5 0V20M10.5 0V20M0 10L10 0M10 20L20 10M10 10L20 0M0 20L10 10" stroke="#000" stroke-width="1" fill="none" shape-rendering="crispEdges"/>
</pattern>
<radialGradient id="soft"><stop offset="0" stop-color="#fff"/><stop offset="0.6" stop-color="#fff"/><stop offset="1" stop-color="#000"/></radialGradient>
</defs></svg>
<svg class="a" style="left:0;top:0" width="1920" height="605" viewBox="0 0 1920 605"><defs><filter id="bl3" filterUnits="userSpaceOnUse" x="400" y="80" width="1520" height="525"><feGaussianBlur stdDeviation="3"/></filter><filter id="bl6" filterUnits="userSpaceOnUse" x="400" y="80" width="1520" height="525"><feGaussianBlur stdDeviation="6"/></filter><clipPath id="ctop1"><path d="M507.5 203.3 L510.0 191.7 L515.0 183.3 L523.3 175.8 L555.0 170.8 L593.3 165.8 L613.3 167.5 L630.0 170.0 L638.3 167.5 L646.7 171.7 L666.7 170.8 L691.7 174.2 L716.7 170.0 L750.0 164.2 L783.3 159.2 L820.0 155.0 L861.7 150.8 L903.3 155.8 L953.3 157.5 L995.0 151.7 L1036.7 145.8 L1061.7 151.7 L1090.0 155.0 L1106.7 160.8 L1116.7 168.3 L1124.2 179.2 L1110.0 195.0 L1095.0 196.7 L1080.0 210.0 L1060.0 223.3 L1041.7 233.3 L1033.3 242.5 L1025.0 240.0 L1010.0 250.0 L1005.0 261.7 L986.7 270.0 L966.7 280.0 L928.3 286.7 L890.0 290.8 L856.7 295.8 L836.7 291.7 L820.0 292.0 L766.7 301.7 L741.7 306.7 L720.0 306.7 L700.0 311.7 L680.0 315.0 L658.3 306.7 L641.7 300.0 L623.3 281.7 L591.7 256.7 L563.3 238.3 L545.0 232.5 L525.0 226.7 L513.3 220.0 L508.3 211.7Z M735.0 291.7 L746.7 283.3 L756.7 273.3 L768.3 275.0 L773.3 281.7 L766.7 288.3 L753.3 290.8 L740.0 292.5Z" clip-rule="evenodd"/></clipPath><clipPath id="cbot1"><path d="M548.3 458.3 L553.3 445.0 L578.3 420.0 L603.3 398.3 L626.7 370.0 L656.7 345.0 L681.7 331.7 L706.7 323.3 L743.3 315.0 L781.7 314.2 L831.7 308.3 L860.0 309.0 L893.3 305.6 L926.6 306.7 L966.6 313.3 L997.7 322.2 L1028.8 346.6 L1059.9 371.1 L1073.2 393.3 L1086.5 426.6 L1106.5 453.2 L1126.5 475.4 L1148.7 486.5 L1170.9 493.2 L1174.2 497.6 L1168.7 508.7 L1139.8 528.7 L1113.2 546.5 L1093.2 533.2 L1071.0 532.1 L1076.5 513.2 L1075.4 484.3 L1055.4 477.7 L1024.3 466.6 L1006.6 453.2 L984.4 433.2 L948.8 419.9 L915.5 408.8 L882.2 404.4 L860.0 402.5 L840.0 401.7 L801.7 400.0 L770.0 396.7 L740.0 398.3 L706.7 415.0 L666.7 433.3 L633.3 450.0 L610.0 460.0 L595.0 466.7 L570.0 468.3 L553.3 463.3Z M710.3 345.7 L724.6 349.5 L742.4 344.3 L752.0 347.1 L763.6 353.2 L775.2 354.6 L784.8 366.9 L780.7 379.2 L773.8 385.3 L758.1 387.4 L738.3 390.8 L712.3 395.6 L698.7 390.8 L690.5 379.2 L692.5 363.5 L702.8 358.7Z" clip-rule="evenodd"/></clipPath><clipPath id="cleft2"><path d="M1518.0 113.3 L1546.8 121.5 L1571.4 128.7 L1593.9 155.4 L1606.2 182.0 L1618.5 206.6 L1621.0 220.5 L1617.9 257.4 L1607.7 277.9 L1593.3 294.3 L1581.0 304.6 L1560.5 318.9 L1546.2 333.3 L1536.5 336.0 L1530.4 345.0 L1516.0 365.1 L1503.7 387.7 L1497.6 410.2 L1485.3 431.7 L1473.0 441.0 L1448.4 451.2 L1413.5 463.5 L1378.7 471.7 L1341.8 492.2 L1313.0 499.4 L1290.5 479.9 L1282.3 459.4 L1282.3 422.5 L1288.5 391.8 L1302.8 361.0 L1317.2 338.5 L1325.4 333.7 L1347.9 309.1 L1370.5 288.6 L1384.8 278.4 L1401.2 270.2 L1413.5 270.2 L1427.9 262.0 L1421.7 251.7 L1419.7 227.1 L1425.8 198.4 L1444.3 171.8 L1470.9 147.2 L1487.3 126.7Z M1408.3 295.0 L1412.0 296.0 L1416.0 306.0 L1421.0 316.0 L1437.0 322.5 L1465.7 314.1 L1471.6 321.3 L1482.4 313.0 L1482.4 295.0 L1486.6 294.4 L1487.2 304.6 L1489.6 314.1 L1488.4 323.7 L1484.8 340.4 L1459.7 350.0 L1441.7 353.6 L1434.6 340.4 L1422.6 324.9 L1417.8 316.0 L1413.0 307.0Z" clip-rule="evenodd"/></clipPath><clipPath id="cright2"><path d="M1540.0 370.2 L1560.5 339.4 L1591.3 306.6 L1611.8 273.8 L1642.5 243.0 L1673.3 233.8 L1704.0 230.8 L1745.0 220.5 L1775.8 228.7 L1806.5 235.9 L1835.2 247.2 L1851.6 259.5 L1852.6 271.8 L1841.4 300.5 L1829.0 327.1 L1826.0 364.0 L1832.1 411.2 L1825.0 413.2 L1812.7 409.1 L1798.3 380.4 L1786.0 380.4 L1769.6 388.6 L1763.5 370.2 L1743.0 374.3 L1718.4 355.8 L1699.9 368.1 L1685.6 382.5 L1681.5 405.0 L1676.0 430.7 L1669.1 434.2 L1667.4 453.0 L1662.3 475.2 L1655.4 490.5 L1645.2 505.9 L1636.7 536.7 L1614.5 564.0 L1602.5 574.2 L1595.7 587.9 L1582.0 591.3 L1571.7 575.9 L1571.7 550.3 L1568.3 531.5 L1556.4 517.9 L1544.4 497.4 L1530.7 488.8 L1519.6 482.0 L1520.5 434.2 L1526.3 402.0 L1534.5 375.4Z" clip-rule="evenodd"/></clipPath></defs><path d="M507.5 203.3 L510.0 191.7 L515.0 183.3 L523.3 175.8 L555.0 170.8 L593.3 165.8 L613.3 167.5 L630.0 170.0 L638.3 167.5 L646.7 171.7 L666.7 170.8 L691.7 174.2 L716.7 170.0 L750.0 164.2 L783.3 159.2 L820.0 155.0 L861.7 150.8 L903.3 155.8 L953.3 157.5 L995.0 151.7 L1036.7 145.8 L1061.7 151.7 L1090.0 155.0 L1106.7 160.8 L1116.7 168.3 L1124.2 179.2 L1110.0 195.0 L1095.0 196.7 L1080.0 210.0 L1060.0 223.3 L1041.7 233.3 L1033.3 242.5 L1025.0 240.0 L1010.0 250.0 L1005.0 261.7 L986.7 270.0 L966.7 280.0 L928.3 286.7 L890.0 290.8 L856.7 295.8 L836.7 291.7 L820.0 292.0 L766.7 301.7 L741.7 306.7 L720.0 306.7 L700.0 311.7 L680.0 315.0 L658.3 306.7 L641.7 300.0 L623.3 281.7 L591.7 256.7 L563.3 238.3 L545.0 232.5 L525.0 226.7 L513.3 220.0 L508.3 211.7Z M735.0 291.7 L746.7 283.3 L756.7 273.3 L768.3 275.0 L773.3 281.7 L766.7 288.3 L753.3 290.8 L740.0 292.5Z" fill="url(#mesh)" fill-rule="evenodd" stroke="#000" stroke-width="2"/><path d="M548.3 458.3 L553.3 445.0 L578.3 420.0 L603.3 398.3 L626.7 370.0 L656.7 345.0 L681.7 331.7 L706.7 323.3 L743.3 315.0 L781.7 314.2 L831.7 308.3 L860.0 309.0 L893.3 305.6 L926.6 306.7 L966.6 313.3 L997.7 322.2 L1028.8 346.6 L1059.9 371.1 L1073.2 393.3 L1086.5 426.6 L1106.5 453.2 L1126.5 475.4 L1148.7 486.5 L1170.9 493.2 L1174.2 497.6 L1168.7 508.7 L1139.8 528.7 L1113.2 546.5 L1093.2 533.2 L1071.0 532.1 L1076.5 513.2 L1075.4 484.3 L1055.4 477.7 L1024.3 466.6 L1006.6 453.2 L984.4 433.2 L948.8 419.9 L915.5 408.8 L882.2 404.4 L860.0 402.5 L840.0 401.7 L801.7 400.0 L770.0 396.7 L740.0 398.3 L706.7 415.0 L666.7 433.3 L633.3 450.0 L610.0 460.0 L595.0 466.7 L570.0 468.3 L553.3 463.3Z M710.3 345.7 L724.6 349.5 L742.4 344.3 L752.0 347.1 L763.6 353.2 L775.2 354.6 L784.8 366.9 L780.7 379.2 L773.8 385.3 L758.1 387.4 L738.3 390.8 L712.3 395.6 L698.7 390.8 L690.5 379.2 L692.5 363.5 L702.8 358.7Z" fill="url(#mesh)" fill-rule="evenodd" stroke="#000" stroke-width="2"/><path d="M1518.0 113.3 L1546.8 121.5 L1571.4 128.7 L1593.9 155.4 L1606.2 182.0 L1618.5 206.6 L1621.0 220.5 L1617.9 257.4 L1607.7 277.9 L1593.3 294.3 L1581.0 304.6 L1560.5 318.9 L1546.2 333.3 L1536.5 336.0 L1530.4 345.0 L1516.0 365.1 L1503.7 387.7 L1497.6 410.2 L1485.3 431.7 L1473.0 441.0 L1448.4 451.2 L1413.5 463.5 L1378.7 471.7 L1341.8 492.2 L1313.0 499.4 L1290.5 479.9 L1282.3 459.4 L1282.3 422.5 L1288.5 391.8 L1302.8 361.0 L1317.2 338.5 L1325.4 333.7 L1347.9 309.1 L1370.5 288.6 L1384.8 278.4 L1401.2 270.2 L1413.5 270.2 L1427.9 262.0 L1421.7 251.7 L1419.7 227.1 L1425.8 198.4 L1444.3 171.8 L1470.9 147.2 L1487.3 126.7Z M1408.3 295.0 L1412.0 296.0 L1416.0 306.0 L1421.0 316.0 L1437.0 322.5 L1465.7 314.1 L1471.6 321.3 L1482.4 313.0 L1482.4 295.0 L1486.6 294.4 L1487.2 304.6 L1489.6 314.1 L1488.4 323.7 L1484.8 340.4 L1459.7 350.0 L1441.7 353.6 L1434.6 340.4 L1422.6 324.9 L1417.8 316.0 L1413.0 307.0Z" fill="url(#mesh2)" fill-rule="evenodd" stroke="#000" stroke-width="2"/><path d="M1540.0 370.2 L1560.5 339.4 L1591.3 306.6 L1611.8 273.8 L1642.5 243.0 L1673.3 233.8 L1704.0 230.8 L1745.0 220.5 L1775.8 228.7 L1806.5 235.9 L1835.2 247.2 L1851.6 259.5 L1852.6 271.8 L1841.4 300.5 L1829.0 327.1 L1826.0 364.0 L1832.1 411.2 L1825.0 413.2 L1812.7 409.1 L1798.3 380.4 L1786.0 380.4 L1769.6 388.6 L1763.5 370.2 L1743.0 374.3 L1718.4 355.8 L1699.9 368.1 L1685.6 382.5 L1681.5 405.0 L1676.0 430.7 L1669.1 434.2 L1667.4 453.0 L1662.3 475.2 L1655.4 490.5 L1645.2 505.9 L1636.7 536.7 L1614.5 564.0 L1602.5 574.2 L1595.7 587.9 L1582.0 591.3 L1571.7 575.9 L1571.7 550.3 L1568.3 531.5 L1556.4 517.9 L1544.4 497.4 L1530.7 488.8 L1519.6 482.0 L1520.5 434.2 L1526.3 402.0 L1534.5 375.4Z" fill="url(#mesh2)" fill-rule="evenodd" stroke="#000" stroke-width="2"/><g clip-path="url(#ctop1)"><path d="M507.5 203.3 L510.0 191.7 L515.0 183.3 L523.3 175.8 L555.0 170.8 L593.3 165.8 L613.3 167.5 L630.0 170.0 L638.3 167.5 L646.7 171.7 L666.7 170.8 L691.7 174.2 L716.7 170.0 L750.0 164.2 L783.3 159.2 L820.0 155.0 L861.7 150.8 L903.3 155.8 L953.3 157.5 L995.0 151.7 L1036.7 145.8 L1061.7 151.7 L1090.0 155.0 L1106.7 160.8 L1116.7 168.3 L1124.2 179.2 L1110.0 195.0 L1095.0 196.7 L1080.0 210.0 L1060.0 223.3 L1041.7 233.3 L1033.3 242.5 L1025.0 240.0 L1010.0 250.0 L1005.0 261.7 L986.7 270.0 L966.7 280.0 L928.3 286.7 L890.0 290.8 L856.7 295.8 L836.7 291.7 L820.0 292.0 L766.7 301.7 L741.7 306.7 L720.0 306.7 L700.0 311.7 L680.0 315.0 L658.3 306.7 L641.7 300.0 L623.3 281.7 L591.7 256.7 L563.3 238.3 L545.0 232.5 L525.0 226.7 L513.3 220.0 L508.3 211.7Z M735.0 291.7 L746.7 283.3 L756.7 273.3 L768.3 275.0 L773.3 281.7 L766.7 288.3 L753.3 290.8 L740.0 292.5Z" fill="none" stroke="#000" stroke-width="9" opacity="0.35" filter="url(#bl3)"/></g><g clip-path="url(#cbot1)"><path d="M548.3 458.3 L553.3 445.0 L578.3 420.0 L603.3 398.3 L626.7 370.0 L656.7 345.0 L681.7 331.7 L706.7 323.3 L743.3 315.0 L781.7 314.2 L831.7 308.3 L860.0 309.0 L893.3 305.6 L926.6 306.7 L966.6 313.3 L997.7 322.2 L1028.8 346.6 L1059.9 371.1 L1073.2 393.3 L1086.5 426.6 L1106.5 453.2 L1126.5 475.4 L1148.7 486.5 L1170.9 493.2 L1174.2 497.6 L1168.7 508.7 L1139.8 528.7 L1113.2 546.5 L1093.2 533.2 L1071.0 532.1 L1076.5 513.2 L1075.4 484.3 L1055.4 477.7 L1024.3 466.6 L1006.6 453.2 L984.4 433.2 L948.8 419.9 L915.5 408.8 L882.2 404.4 L860.0 402.5 L840.0 401.7 L801.7 400.0 L770.0 396.7 L740.0 398.3 L706.7 415.0 L666.7 433.3 L633.3 450.0 L610.0 460.0 L595.0 466.7 L570.0 468.3 L553.3 463.3Z M710.3 345.7 L724.6 349.5 L742.4 344.3 L752.0 347.1 L763.6 353.2 L775.2 354.6 L784.8 366.9 L780.7 379.2 L773.8 385.3 L758.1 387.4 L738.3 390.8 L712.3 395.6 L698.7 390.8 L690.5 379.2 L692.5 363.5 L702.8 358.7Z" fill="none" stroke="#000" stroke-width="9" opacity="0.35" filter="url(#bl3)"/></g><g clip-path="url(#cleft2)"><path d="M1518.0 113.3 L1546.8 121.5 L1571.4 128.7 L1593.9 155.4 L1606.2 182.0 L1618.5 206.6 L1621.0 220.5 L1617.9 257.4 L1607.7 277.9 L1593.3 294.3 L1581.0 304.6 L1560.5 318.9 L1546.2 333.3 L1536.5 336.0 L1530.4 345.0 L1516.0 365.1 L1503.7 387.7 L1497.6 410.2 L1485.3 431.7 L1473.0 441.0 L1448.4 451.2 L1413.5 463.5 L1378.7 471.7 L1341.8 492.2 L1313.0 499.4 L1290.5 479.9 L1282.3 459.4 L1282.3 422.5 L1288.5 391.8 L1302.8 361.0 L1317.2 338.5 L1325.4 333.7 L1347.9 309.1 L1370.5 288.6 L1384.8 278.4 L1401.2 270.2 L1413.5 270.2 L1427.9 262.0 L1421.7 251.7 L1419.7 227.1 L1425.8 198.4 L1444.3 171.8 L1470.9 147.2 L1487.3 126.7Z M1408.3 295.0 L1412.0 296.0 L1416.0 306.0 L1421.0 316.0 L1437.0 322.5 L1465.7 314.1 L1471.6 321.3 L1482.4 313.0 L1482.4 295.0 L1486.6 294.4 L1487.2 304.6 L1489.6 314.1 L1488.4 323.7 L1484.8 340.4 L1459.7 350.0 L1441.7 353.6 L1434.6 340.4 L1422.6 324.9 L1417.8 316.0 L1413.0 307.0Z" fill="none" stroke="#000" stroke-width="9" opacity="0.35" filter="url(#bl3)"/></g><g clip-path="url(#cright2)"><path d="M1540.0 370.2 L1560.5 339.4 L1591.3 306.6 L1611.8 273.8 L1642.5 243.0 L1673.3 233.8 L1704.0 230.8 L1745.0 220.5 L1775.8 228.7 L1806.5 235.9 L1835.2 247.2 L1851.6 259.5 L1852.6 271.8 L1841.4 300.5 L1829.0 327.1 L1826.0 364.0 L1832.1 411.2 L1825.0 413.2 L1812.7 409.1 L1798.3 380.4 L1786.0 380.4 L1769.6 388.6 L1763.5 370.2 L1743.0 374.3 L1718.4 355.8 L1699.9 368.1 L1685.6 382.5 L1681.5 405.0 L1676.0 430.7 L1669.1 434.2 L1667.4 453.0 L1662.3 475.2 L1655.4 490.5 L1645.2 505.9 L1636.7 536.7 L1614.5 564.0 L1602.5 574.2 L1595.7 587.9 L1582.0 591.3 L1571.7 575.9 L1571.7 550.3 L1568.3 531.5 L1556.4 517.9 L1544.4 497.4 L1530.7 488.8 L1519.6 482.0 L1520.5 434.2 L1526.3 402.0 L1534.5 375.4Z" fill="none" stroke="#000" stroke-width="9" opacity="0.35" filter="url(#bl3)"/></g><g clip-path="url(#ctop1)" fill="none" stroke="#000"><path d="M505 170L700 160L720 300L640 300L560 240L505 215Z" fill="#000" opacity="0.18" filter="url(#bl6)" stroke="none"/><path d="M1040 150L1125 175L1110 200L1040 240L1000 200Z" fill="#000" opacity="0.2" filter="url(#bl6)" stroke="none"/><ellipse cx="527" cy="203" rx="16" ry="13" stroke-width="5" opacity="0.45" filter="url(#bl3)"/><ellipse cx="752" cy="280" rx="22" ry="18" stroke-width="12" opacity="0.6" filter="url(#bl3)"/><path d="M540 235C600 260 680 290 760 300" stroke-width="6" opacity="0.3" filter="url(#bl3)"/><path d="M860 250C920 240 990 225 1060 195" stroke-width="6" opacity="0.35" filter="url(#bl3)"/><path d="M1000 175C1040 170 1080 172 1120 185" stroke-width="6" opacity="0.35" filter="url(#bl3)"/><path d="M960 270C1000 260 1040 240 1070 220" stroke-width="5" opacity="0.3" filter="url(#bl3)"/><path d="M520 175C700 160 900 150 1110 158" stroke-width="5" opacity="0.35" filter="url(#bl3)"/></g><g clip-path="url(#cbot1)" fill="none" stroke="#000"><path d="M545 460L620 380L700 330L720 400L620 460L570 470Z" fill="#000" opacity="0.2" filter="url(#bl6)" stroke="none"/><path d="M960 330L1060 380L1100 460L1060 480L990 420L930 380Z" fill="#000" opacity="0.15" filter="url(#bl6)" stroke="none"/><path d="M590 440C630 410 670 395 710 385" stroke-width="6" opacity="0.4" filter="url(#bl3)"/><path d="M560 455C590 430 630 400 660 370" stroke-width="4" opacity="0.3" filter="url(#bl3)"/><path d="M930 335C980 360 1030 400 1070 470" stroke-width="6" opacity="0.4" filter="url(#bl3)"/><path d="M880 360C930 380 980 420 1040 470" stroke-width="5" opacity="0.3" filter="url(#bl3)"/><path d="M850 330C880 350 900 370 930 380" stroke-width="5" opacity="0.25" filter="url(#bl3)"/><ellipse cx="738" cy="370" rx="52" ry="30" stroke-width="8" opacity="0.4" filter="url(#bl3)"/><path d="M795 350C800 370 800 390 790 405" stroke-width="10" opacity="0.4" filter="url(#bl3)"/></g><g clip-path="url(#cleft2)"><path d="M1490 110L1640 120L1640 330L1540 340L1480 290L1500 200Z" fill="#000" opacity="0.22" filter="url(#bl6)"/><g fill="none" stroke="#000" stroke-width="3.5" opacity="0.45" filter="url(#bl3)"><path d="M1470 160C1520 170 1560 200 1600 240"/><path d="M1462 188C1512 200 1560 240 1605 278"/><path d="M1475 222C1515 236 1555 272 1592 305"/><path d="M1500 130C1550 140 1590 180 1615 210"/><path d="M1490 258C1525 275 1552 300 1572 322"/><path d="M1520 118C1560 125 1595 150 1612 175"/></g><path d="M1290 470C1320 495 1360 490 1400 470" fill="none" stroke="#000" stroke-width="6" opacity="0.3" filter="url(#bl3)"/></g><g clip-path="url(#cright2)"><path d="M1545 370C1590 310 1640 250 1700 235L1720 260C1670 280 1620 320 1580 380Z" fill="#000" opacity="0.35" filter="url(#bl6)"/><path d="M1770 235C1810 245 1850 265 1850 300C1835 340 1825 390 1800 385C1780 340 1770 300 1760 260Z" fill="#000" opacity="0.3" filter="url(#bl6)"/><g fill="none" stroke="#000" stroke-width="4" opacity="0.4" filter="url(#bl3)"><path d="M1560 380C1610 330 1660 290 1720 262"/><path d="M1770 250C1790 285 1805 320 1812 365"/><path d="M1745 360C1765 330 1780 300 1785 262"/><path d="M1530 470C1560 520 1580 560 1590 590"/></g></g><mask id="m7" maskUnits="userSpaceOnUse" x="1418" y="177" width="60" height="76"><ellipse cx="1448" cy="215" rx="30" ry="38" fill="url(#soft)"/></mask><g clip-path="url(#cleft2)"><ellipse cx="1448" cy="215" rx="30" ry="38" fill="url(#meshBig)" mask="url(#m7)" opacity="0.65"/></g><mask id="m1" maskUnits="userSpaceOnUse" x="785" y="178" width="150" height="84"><ellipse cx="860" cy="220" rx="75" ry="42" fill="url(#soft)"/></mask><g clip-path="url(#ctop1)"><ellipse cx="860" cy="220" rx="75" ry="42" fill="url(#meshBig)" mask="url(#m1)" opacity="0.65"/></g><mask id="m2" maskUnits="userSpaceOnUse" x="967" y="188" width="56" height="40"><ellipse cx="995" cy="208" rx="28" ry="20" fill="url(#soft)"/></mask><g clip-path="url(#ctop1)"><ellipse cx="995" cy="208" rx="28" ry="20" fill="url(#meshBig)" mask="url(#m2)" opacity="0.65"/></g><mask id="m3" maskUnits="userSpaceOnUse" x="875" y="318" width="90" height="48"><ellipse cx="920" cy="342" rx="45" ry="24" fill="url(#soft)"/></mask><g clip-path="url(#cbot1)"><ellipse cx="920" cy="342" rx="45" ry="24" fill="url(#meshBig)" mask="url(#m3)" opacity="0.65"/></g><mask id="m4" maskUnits="userSpaceOnUse" x="1273" y="355" width="90" height="140"><ellipse cx="1318" cy="425" rx="45" ry="70" fill="url(#soft)"/></mask><g clip-path="url(#cleft2)"><ellipse cx="1318" cy="425" rx="45" ry="70" fill="url(#meshBig)" mask="url(#m4)" opacity="0.65"/></g><mask id="m5" maskUnits="userSpaceOnUse" x="1672" y="262" width="96" height="72"><ellipse cx="1720" cy="298" rx="48" ry="36" fill="url(#soft)"/></mask><g clip-path="url(#cright2)"><ellipse cx="1720" cy="298" rx="48" ry="36" fill="url(#meshBig)" mask="url(#m5)" opacity="0.65"/></g><mask id="m6" maskUnits="userSpaceOnUse" x="1563" y="422" width="84" height="140"><ellipse cx="1605" cy="492" rx="42" ry="70" fill="url(#soft)"/></mask><g clip-path="url(#cright2)"><ellipse cx="1605" cy="492" rx="42" ry="70" fill="url(#meshBig)" mask="url(#m6)" opacity="0.65"/></g></svg>
<div class="a" style="left:1169px;top:606px;width:40px;height:4px;background:repeating-linear-gradient(90deg,#c0c0c0 0 1px,#d4d4d4 1px 2px)"></div>
<div class="a" style="left:455px;top:587px;width:3px;height:40px;background:repeating-linear-gradient(#c0c0c0 0 1px,#d4d4d4 1px 2px)"></div>
<div class="a" style="left:460px;top:626px;width:1460px;height:510px;background:#000"></div>
<div class="a" style="left:946px;top:611px;width:1px;height:525px;background:#5c5c78"></div>
<div class="a" style="left:1433px;top:611px;width:1px;height:525px;background:#5c5c78"></div>
<div class="a" style="left:478px;top:655px;width:450px;height:450px;background:#808080"></div>
<div class="a" style="left:965px;top:755px;width:451px;height:251px;background:#808080"></div>
<div class="a" style="left:1452px;top:755px;width:450px;height:251px;background:#808080"></div>
<div class="a" style="left:460px;top:611px;width:486px;height:15px;background:linear-gradient(#f84028 0,#dc4028 25%,#e8482e 60%,#ff4c32 100%)"></div><svg class="a" style="left:464px;top:616px" width="9" height="5"><path d="M0 2.5H2.5" stroke="#333" stroke-width="0.6" opacity="0.7"/><rect x="2.5" y="1" width="2.5" height="3" rx="0.8" fill="#333"/><rect x="5" y="1.8" width="2" height="1.4" fill="#333"/><rect x="7" y="1" width="1.2" height="3" fill="#333"/></svg><div class="a" style="left:477px;top:611px;width:14px;height:15px;background:#ff8070"></div><div class="t" style="left:479px;top:611px;font-size:12px;line-height:14px">R</div><svg class="a" style="left:495px;top:613px" width="11" height="11"><rect x="2" y="2" width="7" height="7" fill="#000" opacity="0.3"/><rect x="2" y="2" width="3.5" height="3.5" fill="#fff" opacity="0.25"/><rect x="5.5" y="5.5" width="3.5" height="3.5" fill="#000" opacity="0.3"/><circle cx="5.5" cy="0.8" r="0.8" fill="#222"/><circle cx="5.5" cy="10.2" r="0.8" fill="#222"/><circle cx="0.8" cy="5.5" r="0.8" fill="#222"/><circle cx="10.2" cy="5.5" r="0.8" fill="#222"/></svg><div class="a" style="left:516px;top:616px;height:6px;width:354px;border:1px solid #777;background:linear-gradient(#e0e0e0,#f8f8f8)"></div><div class="a" style="left:516px;top:616px;height:6px;width:194px;border:1px solid #2f4f78;background:linear-gradient(#4f7fb0,#8cc0ea)"></div><div class="a" style="left:708px;top:612px;width:9px;height:13px;border:1px solid #9aa;border-radius:3px;background:#f4f4f4"></div><div class="a" style="left:873px;top:611px;width:73px;height:15px;background:#ff8070"></div><div class="t" style="left:875px;top:612px;font-size:11px;letter-spacing:-0.25px;line-height:14px">S: 64.692mm</div>
<div class="a" style="left:947px;top:611px;width:486px;height:15px;background:linear-gradient(#fae050 0,#d8c038 25%,#e0c840 60%,#f8dc48 100%)"></div><svg class="a" style="left:951px;top:616px" width="9" height="5"><path d="M0 2.5H2.5" stroke="#333" stroke-width="0.6" opacity="0.7"/><rect x="2.5" y="1" width="2.5" height="3" rx="0.8" fill="#333"/><rect x="5" y="1.8" width="2" height="1.4" fill="#333"/><rect x="7" y="1" width="1.2" height="3" fill="#333"/></svg><div class="a" style="left:964px;top:611px;width:14px;height:15px;background:#fde880"></div><div class="t" style="left:966px;top:611px;font-size:12px;line-height:14px">Y</div><svg class="a" style="left:982px;top:613px" width="11" height="11"><rect x="2" y="2" width="7" height="7" fill="#000" opacity="0.3"/><rect x="2" y="2" width="3.5" height="3.5" fill="#fff" opacity="0.25"/><rect x="5.5" y="5.5" width="3.5" height="3.5" fill="#000" opacity="0.3"/><circle cx="5.5" cy="0.8" r="0.8" fill="#222"/><circle cx="5.5" cy="10.2" r="0.8" fill="#222"/><circle cx="0.8" cy="5.5" r="0.8" fill="#222"/><circle cx="10.2" cy="5.5" r="0.8" fill="#222"/></svg><div class="a" style="left:1003px;top:616px;height:6px;width:350px;border:1px solid #777;background:linear-gradient(#e0e0e0,#f8f8f8)"></div><div class="a" style="left:1003px;top:616px;height:6px;width:168px;border:1px solid #2f4f78;background:linear-gradient(#4f7fb0,#8cc0ea)"></div><div class="a" style="left:1169px;top:612px;width:9px;height:13px;border:1px solid #9aa;border-radius:3px;background:#f4f4f4"></div><div class="a" style="left:1356px;top:611px;width:77px;height:15px;background:#fde880"></div><div class="t" style="left:1358px;top:612px;font-size:11px;letter-spacing:-0.25px;line-height:14px">R: -32.308mm</div>
<div class="a" style="left:1434px;top:611px;width:486px;height:15px;background:linear-gradient(#80e060 0,#62a848 25%,#5c9c44 60%,#68b24c 100%)"></div><svg class="a" style="left:1438px;top:616px" width="9" height="5"><path d="M0 2.5H2.5" stroke="#333" stroke-width="0.6" opacity="0.7"/><rect x="2.5" y="1" width="2.5" height="3" rx="0.8" fill="#333"/><rect x="5" y="1.8" width="2" height="1.4" fill="#333"/><rect x="7" y="1" width="1.2" height="3" fill="#333"/></svg><div class="a" style="left:1451px;top:611px;width:14px;height:15px;background:#8ae46a"></div><div class="t" style="left:1453px;top:611px;font-size:12px;line-height:14px">G</div><svg class="a" style="left:1469px;top:613px" width="11" height="11"><rect x="2" y="2" width="7" height="7" fill="#000" opacity="0.3"/><rect x="2" y="2" width="3.5" height="3.5" fill="#fff" opacity="0.25"/><rect x="5.5" y="5.5" width="3.5" height="3.5" fill="#000" opacity="0.3"/><circle cx="5.5" cy="0.8" r="0.8" fill="#222"/><circle cx="5.5" cy="10.2" r="0.8" fill="#222"/><circle cx="0.8" cy="5.5" r="0.8" fill="#222"/><circle cx="10.2" cy="5.5" r="0.8" fill="#222"/></svg><div class="a" style="left:1490px;top:616px;height:6px;width:352px;border:1px solid #777;background:linear-gradient(#e0e0e0,#f8f8f8)"></div><div class="a" style="left:1490px;top:616px;height:6px;width:189px;border:1px solid #2f4f78;background:linear-gradient(#4f7fb0,#8cc0ea)"></div><div class="a" style="left:1677px;top:612px;width:9px;height:13px;border:1px solid #9aa;border-radius:3px;background:#f4f4f4"></div><div class="a" style="left:1846px;top:611px;width:74px;height:15px;background:#8ae46a"></div><div class="t" style="left:1849px;top:612px;font-size:11px;letter-spacing:-0.25px;line-height:14px">A: 66.457mm</div>
<svg class="a" style="left:0;top:0" width="1920" height="1171" viewBox="0 0 1920 1171"><path d="M661.3 836.0 L676.4 835.0 L689.5 836.9 L733.7 838.3 L742.1 840.2 L753.4 847.2 L755.3 857.6 L745.9 867.0 L737.4 875.4 L725.2 875.9 L721.5 874.5 L715.8 875.4 L706.4 874.0 L702.7 870.7 L689.5 871.7 L682.0 865.1 L661.3 846.3Z M682.0 877.8 L717.7 878.2 L740.3 881.1 L746.8 882.9 L758.1 891.4 L766.6 897.0 L771.3 902.7 L774.1 907.4 L768.4 914.9 L763.7 918.6 L747.8 919.1 L732.7 913.0 L714.0 905.0 L705.5 902.7 L680.1 902.2 L674.5 904.1 L669.8 909.3 L664.2 910.7 L651.0 910.7 L646.3 906.9 L646.3 902.7 L652.9 896.1 L659.5 892.3 L668.9 886.7 L678.2 880.1Z M683.9 884.8 L688.6 885.8 L695.2 887.6 L705.5 895.2 L693.3 896.1 L689.5 898.4 L683.9 896.1 L681.1 892.3Z M1154.1 853.1 L1163.1 853.1 L1166.9 858.4 L1175.0 858.8 L1178.1 864.4 L1184.1 865.0 L1185.9 870.0 L1185.9 880.0 L1180.0 881.3 L1178.1 886.9 L1171.3 886.9 L1166.9 885.0 L1160.0 880.0 L1150.0 869.4 L1147.8 867.5 L1147.8 859.1 L1151.9 855.0Z M1187.8 865.0 L1193.1 859.1 L1198.8 856.9 L1208.1 848.1 L1213.8 848.1 L1220.0 851.3 L1220.0 859.1 L1213.8 863.8 L1211.9 873.8 L1207.5 880.0 L1203.1 880.0 L1201.3 876.3 L1200.0 870.0 L1195.0 876.3 L1187.8 878.1Z M1636.7 878.3 L1639.2 874.2 L1646.7 866.7 L1655.8 863.3 L1663.3 859.2 L1717.5 859.2 L1723.3 864.6 L1730.8 869.2 L1740.0 875.8 L1748.3 879.2 L1755.0 884.2 L1760.8 889.2 L1760.8 895.8 L1755.0 898.3 L1752.5 904.2 L1752.9 916.7 L1748.3 916.7 L1740.0 902.5 L1725.0 901.7 L1719.2 899.2 L1708.3 889.2 L1700.8 883.3 L1690.0 883.3 L1690.0 885.0 L1675.0 885.0 L1669.2 880.8 L1667.5 890.0 L1665.0 894.2 L1661.7 895.0 L1657.5 892.5 L1653.3 889.2 L1645.0 889.2 L1640.8 890.8 L1636.7 889.2Z" fill="#fff" fill-rule="evenodd" shape-rendering="crispEdges"/></svg>
<div class="a" style="left:1888px;top:1140px;width:30px;height:27px;border:1px solid #9a9a9a;border-radius:3px;background:#f4f4f4"></div>
<svg class="a" style="left:1890px;top:1141px" width="26" height="26"><circle cx="13" cy="13" r="11" fill="#8a8a8a"/><path d="M8.5 8.5L17.5 17.5M17.5 8.5L8.5 17.5" stroke="#fff" stroke-width="2.6"/></svg>
</body></html>
